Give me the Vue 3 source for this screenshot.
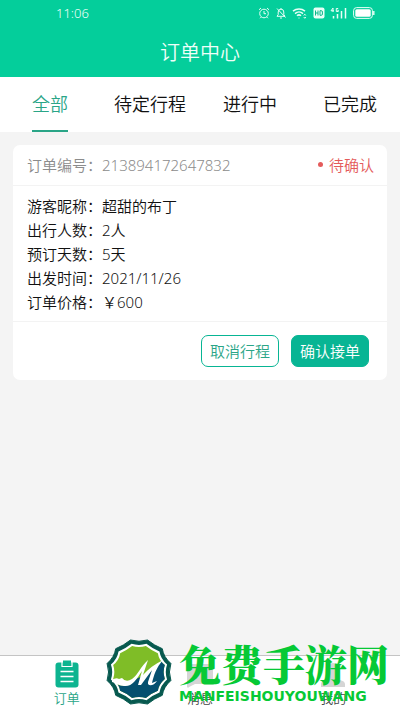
<template>
  <div class="page">
    <header class="top">
      <div class="status">
        <span class="clock">11:06</span>
        <div class="status-icons">
          <svg width="12" height="12" viewBox="0 0 12 12" class="line">
            <circle cx="6" cy="6.5" r="4.3" />
            <path d="M6 4v2.7h2M1 2.8 3 1M11 2.8 9 1M3 10.2l-1 1M9 10.2l1 1" />
          </svg>
          <svg width="12" height="12" viewBox="0 0 12 12" class="line">
            <path d="M2 9.3h8L8.8 7.6V5A2.8 2.8 0 0 0 3.2 5v2.6zM6 2V1M5 11h2M2 1.5l8.5 9" />
          </svg>
          <svg width="16" height="12" viewBox="0 0 16 12" class="line wifi">
            <path d="M1 4.2a9.5 9.5 0 0 1 12 0M3 6.6a6 6 0 0 1 8 0M5 8.8a3 3 0 0 1 4 0" />
            <path d="M6.5 11h1M11.8 8.5l1-1.3 1 1.3M11.8 10l1 1.3 1-1.3" class="thin" />
          </svg>
          <svg width="12" height="12" viewBox="0 0 12 12">
            <rect x="0.5" y="0.5" width="11" height="11" rx="2" fill="#e8fff7" />
            <path d="M2.5 3.5v5M5 3.5v5M2.5 6H5M7 3.7v4.6h1.2a1.2 1.2 0 0 0 1.2-1.2V5a1.2 1.2 0 0 0-1.2-1.3z" fill="none" stroke="#08b88a" />
          </svg>
          <svg width="18" height="12" viewBox="0 0 18 12" class="line">
            <path d="M3 5V1L1 3.8h3M8.2 1.5H6.3v3h2V3.2H7.3" class="thin" />
            <path d="M3.5 9v2.5M7.5 7v4.5M11.5 4v7.5M15.5 1v10.5" class="bars" />
          </svg>
          <svg width="22" height="12" viewBox="0 0 22 12">
            <rect x="0.6" y="0.6" width="18.8" height="10.8" rx="3" fill="none" stroke="#e8fff7" />
            <rect x="2.3" y="2.3" width="15.4" height="7.4" rx="1.5" fill="#fff" />
            <path d="M20.8 4v4" stroke="#e8fff7" stroke-width="1.4" />
          </svg>
        </div>
      </div>
      <h1>订单中心</h1>
    </header>

    <nav class="tabs">
      <button
        v-for="tab in tabs"
        :key="tab"
        type="button"
        :class="{ active: tab === activeTab }"
        @click="activeTab = tab"
      >
        <span>{{ tab }}</span>
      </button>
    </nav>

    <main>
      <article class="card">
        <div class="card-head">
          <span>订单编号：213894172647832</span>
          <span class="state">待确认</span>
        </div>
        <dl class="details">
          <div v-for="row in details" :key="row.label">
            <dt>{{ row.label }}：</dt>
            <dd>{{ row.value }}</dd>
          </div>
        </dl>
        <div class="actions">
          <button type="button" class="outline">取消行程</button>
          <button type="button" class="solid">确认接单</button>
        </div>
      </article>
    </main>

    <footer class="bottom">
      <a href="#" class="active">
        <svg width="24" height="28" viewBox="0 0 24 28">
          <rect x="0.5" y="2.5" width="23" height="25" rx="3" fill="#0db490" />
          <path d="M7 2v4.5h10V2" fill="none" stroke="#fff" stroke-width="1.2" />
          <path d="M8 0.5h8V5H8z" fill="#0db490" />
          <path d="M5.5 11.5h13M5.5 16.5h13M5.5 21.5h13" stroke="#fff" stroke-width="1.5" />
        </svg>
        <span>订单</span>
      </a>
      <a href="#">
        <svg width="26" height="28" viewBox="0 0 26 28">
          <path d="M3 4h20a3 3 0 0 1 3 3v14a3 3 0 0 1-3 3H8l-6 3a1 1 0 0 1-2-1V7a3 3 0 0 1 3-3z" fill="#d5d5d5" />
        </svg>
        <span>消息</span>
      </a>
      <a href="#">
        <svg width="26" height="28" viewBox="0 0 26 28">
          <circle cx="13" cy="10" r="7" fill="#d5d5d5" />
          <path d="M1 27v-3c0-3 5-4 9-5v-4h6v4c4 1 9 2 9 5v3z" fill="#d5d5d5" />
        </svg>
        <span>我的</span>
      </a>

      <div class="watermark">
        <svg width="68" height="66" viewBox="0 0 68 66">
          <defs>
            <path
              id="badge"
              d="M8.5-32Q15.300-26.500 23.300-23.300 24.500-15 31.900-8.500 29 0 31.900 8.500 24.500 15 23.300 23.300 15.300 26.500 8.500 32 0 29.500-8.500 32-15.300 26.500-23.300 23.300-24.500 15-31.900 8.500-29 0-31.900-8.500-24.500-15-23.300-23.300-15.300-26.500-8.500-32 0-29.500 8.500-32z"
            />
            <clipPath id="inner">
              <use href="#badge" transform="translate(34 33) scale(0.81)" />
            </clipPath>
          </defs>
          <use href="#badge" transform="translate(34 33)" fill="#07594f" stroke="#07594f" stroke-linejoin="round" />
          <use href="#badge" transform="translate(34 33) scale(0.88)" fill="#fff" />
          <g clip-path="url(#inner)">
            <path d="M0 0h68v66H0z" fill="#7fbd27" />
            <path d="M68 20H58L44 34 31 40C26 47 20 48 10 45v21h58z" fill="#05506f" />
            <path d="M42 22 38 36 56 22z" fill="#7fbd27" />
          </g>
          <path d="M7 41q4-3 7-1l3-1q4 5 10 1C33 36 36 27 43 21L38 36C43 30 50 25 58 21 51 29 49 36 47 44l5-2c-3 5-10 6-9 1l4-12-11 15h-3l4-14C31 41 27 48 19 47 14 47 12 44 7 43z" fill="#fff" />
        </svg>
        <div class="brand">
          <strong>免费手游网</strong>
          <span>MANFEISHOUYOUWANG</span>
        </div>
      </div>
    </footer>
  </div>
</template>

<script setup>
import { ref } from "vue";

const tabs = ["全部", "待定行程", "进行中", "已完成"];
const activeTab = ref("全部");

const details = [
  { label: "游客昵称", value: "超甜的布丁" },
  { label: "出行人数", value: "2人" },
  { label: "预订天数", value: "5天" },
  { label: "出发时间", value: "2021/11/26" },
  { label: "订单价格", value: "￥600" },
];
</script>

<style>
body {
  margin: 0;
  background: #f4f4f4;
}
</style>

<style scoped>
.page {
  min-height: 100vh;
  display: flex;
  flex-direction: column;
  font-family: "Noto Sans", "Noto Sans CJK SC", sans-serif;
  font-size: 15px;
  font-weight: 350;
  color: #111;
}

button {
  font: inherit;
  cursor: pointer;
}

.top {
  background: #04ce9b;
  color: #effff9;
}

.status {
  display: flex;
  justify-content: space-between;
  align-items: center;
  height: 26px;
  padding: 0 25px 0 56px;
}

.clock {
  font-size: 13px;
}

.status-icons {
  display: flex;
  align-items: center;
  gap: 5px;
}

.line {
  fill: none;
  stroke: #e8fff7;
  stroke-width: 1;
}

.wifi {
  stroke-width: 1.5;
}

.thin {
  stroke-width: 1;
}

.bars {
  stroke-width: 1.5;
}

h1 {
  margin: 0;
  padding-top: 3px;
  line-height: 48px;
  text-align: center;
  font-size: 20px;
  font-weight: 350;
}

.tabs {
  display: grid;
  grid-template-columns: repeat(4, 1fr);
  height: 55px;
  background: #fff;
}

.tabs button {
  display: flex;
  justify-content: center;
  padding: 0;
  border: none;
  background: none;
  font-size: 18px;
  color: #111;
}

.tabs span {
  box-sizing: border-box;
  height: 55px;
  line-height: 54px;
}

.tabs .active span {
  color: #2aa587;
  border-bottom: 2px solid #2aa587;
}

main {
  flex: 1;
  padding: 13px;
}

.card {
  background: #fff;
  border-radius: 7px;
}

.card-head {
  display: flex;
  justify-content: space-between;
  align-items: center;
  height: 38px;
  padding: 0 13px 2px 14px;
  border-bottom: 1px solid #f3f3f3;
  color: #8c8c8c;
}

.state {
  display: flex;
  align-items: center;
  gap: 6px;
  color: #e45b5b;
}

.state::before {
  content: "";
  width: 5px;
  height: 5px;
  border-radius: 50%;
  background: #e45b5b;
}

.details {
  margin: 0;
  padding: 8px 14px 7px;
}

.details div {
  display: flex;
  line-height: 24px;
}

.details dd {
  margin: 0;
}

.actions {
  display: flex;
  justify-content: flex-end;
  gap: 12px;
  padding: 13px 18px;
  border-top: 1px solid #f3f3f3;
}

.actions button {
  width: 78px;
  height: 32px;
  padding: 0 0 2px;
  border: 1px solid #08b594;
  border-radius: 7px;
}

.actions .outline {
  background: #fff;
  color: #2aa587;
}

.actions .solid {
  background: #08b594;
  color: #fff;
}

.bottom {
  position: relative;
  display: grid;
  grid-template-columns: repeat(3, 1fr);
  height: 55px;
  border-top: 1px solid #c4c4c4;
  background: #fff;
}

.bottom a {
  display: flex;
  flex-direction: column;
  align-items: center;
  padding-top: 4px;
  font-size: 13px;
  line-height: 20px;
  color: #444;
  text-decoration: none;
}

.bottom .active {
  color: #2aa587;
}

.watermark {
  position: absolute;
  right: 11px;
  bottom: 6px;
  display: flex;
  align-items: center;
  gap: 6px;
  color: #06c935;
  pointer-events: none;
}

.brand {
  display: flex;
  flex-direction: column;
}

.brand strong {
  font-family: "Noto Serif CJK SC", "Noto Sans CJK SC", serif;
  font-size: 42px;
  font-weight: 900;
  line-height: 48px;
}

.brand span {
  font-family: "DejaVu Sans", sans-serif;
  font-size: 14px;
  font-weight: 700;
  line-height: 18px;
}
</style>
